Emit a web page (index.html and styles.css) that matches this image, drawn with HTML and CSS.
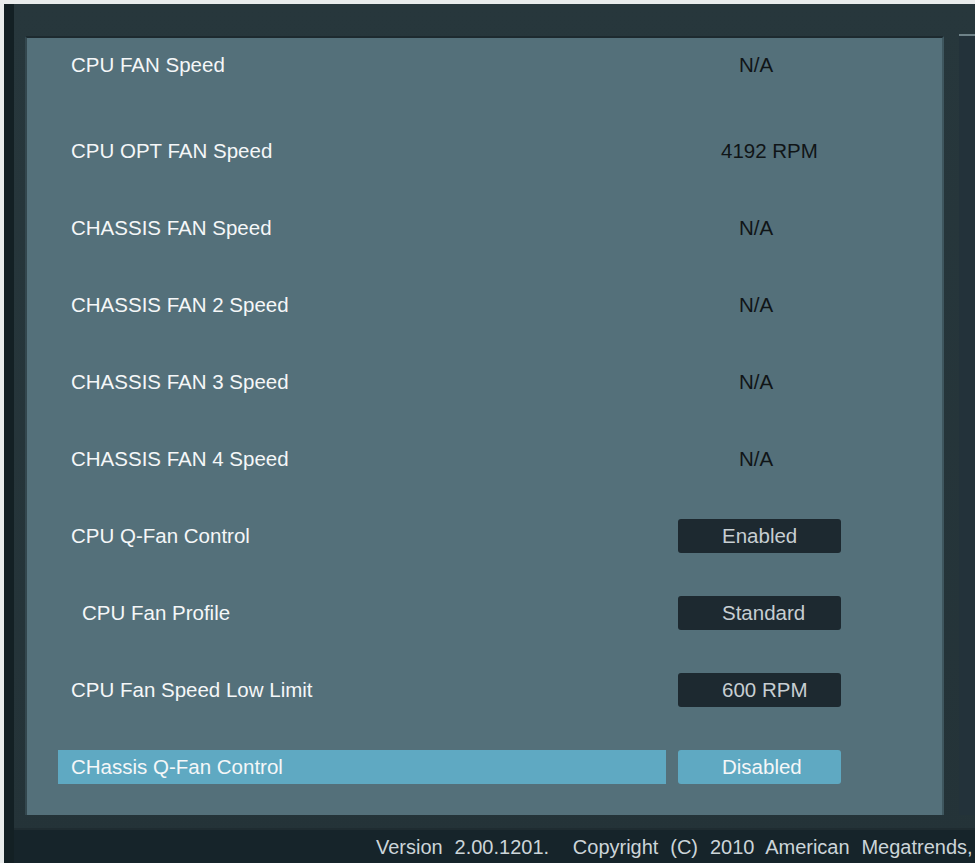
FILE: index.html
```html
<!DOCTYPE html>
<html lang="en">
<head>
    <meta charset="UTF-8">
    <title>Monitor - Fan Speed</title>
    <link rel="stylesheet" href="styles.css">
</head>
<body>
    <div class="screen">
        <div class="side-strip"></div>
        <div class="main">
            <div class="frame">
                <div class="panel">
                    <div class="row first">
                        <div class="label">CPU FAN Speed</div>
                        <div class="value na">N/A</div>
                    </div>
                    <div class="row">
                        <div class="label">CPU OPT FAN Speed</div>
                        <div class="value">4192 RPM</div>
                    </div>
                    <div class="row">
                        <div class="label">CHASSIS FAN Speed</div>
                        <div class="value na">N/A</div>
                    </div>
                    <div class="row">
                        <div class="label">CHASSIS FAN 2 Speed</div>
                        <div class="value na">N/A</div>
                    </div>
                    <div class="row">
                        <div class="label">CHASSIS FAN 3 Speed</div>
                        <div class="value na">N/A</div>
                    </div>
                    <div class="row">
                        <div class="label">CHASSIS FAN 4 Speed</div>
                        <div class="value na">N/A</div>
                    </div>
                    <div class="row">
                        <div class="label">CPU Q-Fan Control</div>
                        <div class="value btn">Enabled</div>
                    </div>
                    <div class="row">
                        <div class="label sub">CPU Fan Profile</div>
                        <div class="value btn">Standard</div>
                    </div>
                    <div class="row">
                        <div class="label">CPU Fan Speed Low Limit</div>
                        <div class="value btn">600 RPM</div>
                    </div>
                    <div class="row selected">
                        <div class="label">CHassis Q-Fan Control</div>
                        <div class="value btn">Disabled</div>
                    </div>
                </div>
                <div class="next-panel"></div>
            </div>
            <div class="footer">Version 2.00.1201.&nbsp; Copyright (C) 2010 American Megatrends,</div>
        </div>
    </div>
</body>
</html>
```

FILE: styles.css
```css
html, body {
    margin: 0;
    height: 100%;
}
body {
    background: #e9ecec;
    font-family: "Liberation Sans", Arial, sans-serif;
    padding: 4px 0 0 4px;
    box-sizing: border-box;
    overflow: hidden;
}
.screen {
    display: flex;
    height: 859px;
    background: #17252a;
}
.side-strip {
    width: 10px;
    background: #132024;
}
.main {
    flex: 1;
    display: flex;
    flex-direction: column;
    background: linear-gradient(180deg, #27373c 0%, #243338 100%);
    min-width: 0;
}
.frame {
    display: flex;
    padding: 32px 0 13px 1px;
    border-bottom: 2px solid #1f2c31;
    box-shadow: 0 2px 0 #33464c;
}
.panel {
    width: 919px;
    height: 779px;
    box-sizing: border-box;
    background: #54707a;
    border-top: 2px solid #1d2a2f;
    border-left: 2px solid #33474e;
    border-right: 2px solid #3f575f;
    padding: 10px 0 0 31px;
    display: flex;
    flex-direction: column;
    gap: 43px;
    margin-left: 10px;
}
.next-panel {
    flex: 1;
    margin-left: 15px;
    border-top: 2px solid #6e8288;
    margin-top: -2px;
    background: #23323a;
}
.row {
    display: flex;
    align-items: center;
    height: 34px;
}
.row.first {
    margin-bottom: 9px;
}
.label {
    width: 608px;
    height: 100%;
    box-sizing: border-box;
    padding-left: 13px;
    display: flex;
    align-items: center;
    color: #f5f7f8;
    font-size: 20.5px;
}
.label.sub {
    padding-left: 24px;
}
.value {
    width: 163px;
    height: 100%;
    margin-left: 12px;
    box-sizing: border-box;
    padding-left: 43px;
    display: flex;
    align-items: center;
    color: #101517;
    font-size: 20.5px;
}
.value.na {
    padding-left: 61px;
}
.value.btn {
    background: #1d2930;
    color: #c7ced2;
    border-radius: 3px;
    padding-left: 44px;
}
.row.selected .label {
    background: #5fa9c2;
}
.row.selected .value {
    background: #5fa9c2;
    color: #f5f7f8;
}
.footer {
    flex: 1;
    background: #16242a;
    color: #ccd5d9;
    font-family: "Liberation Sans Narrow", "Liberation Sans", Arial, sans-serif;
    font-size: 20px;
    word-spacing: 6.3px;
    white-space: nowrap;
    padding: 6px 0 0 362px;
    overflow: hidden;
}
```
